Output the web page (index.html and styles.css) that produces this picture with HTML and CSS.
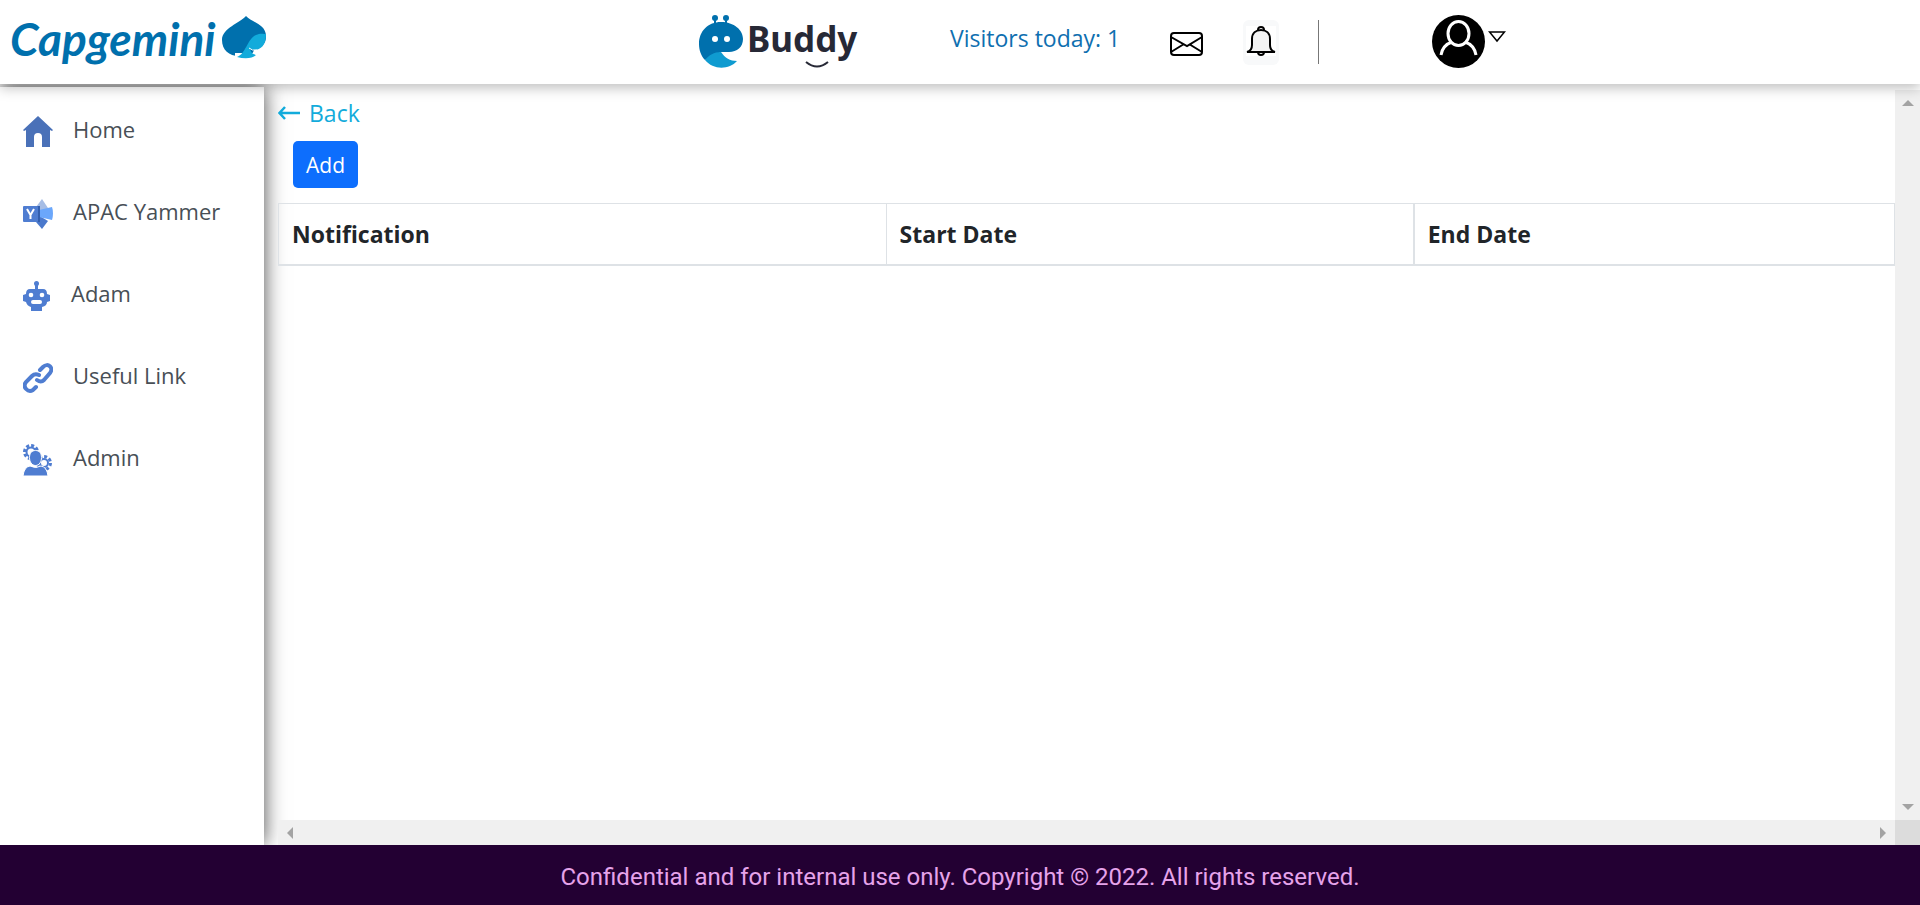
FILE: index.html
```html
<!DOCTYPE html>
<html lang="en">
<head>
<meta charset="utf-8">
<title>Buddy - Notifications</title>
<link rel="stylesheet" href="styles.css">
</head>
<body>
<header class="topbar">
  <a class="brand" href="#" aria-label="Capgemini home">
    <svg width="260" height="68" viewBox="0 0 260 68">
      <text class="brand-name" x="-1" y="48">Capgemini</text>
      <path fill="#0070ad" d="M235 8c5 6 20 8 20 20 0 9-4 10-10 10-4 9-7 14-12 14-3-2-4-4-5-4-10 0-17-6-17-16 0-12 18-17 24-24z"/>
      <path fill="#fff" d="M224 45h22v8h-22z"/>
      <path fill="#12abdb" d="M255 26c0 11-5 16-12 16-1 0-3-1-4-1 1 4 3 5 6 6-4 4-12 4-19 2 9-3 10-18 19-22 4-2 8-1 10-1z"/>
      <path fill="none" stroke="#fff" d="M238 40q3 3 8 2"/>
    </svg>
  </a>
  <a class="buddy" href="#">
    <svg width="44" height="54" viewBox="0 0 44 54" aria-hidden="true">
      <g fill="#0070ad"><circle cx="16" cy="4" r="3"/><circle cx="27" cy="4" r="3"/>
      <path d="M15 4h2v6h-2zM26 4h2v6h-2z"/>
      <path d="M22 8c13 0 22 8 22 17 0 8-6 13-14 13h-8L6 46C2 42 0 36 0 30 0 17 9 8 22 8z"/></g>
      <path fill="#0f9bd0" d="M6 46c4-5 9-8 16-8 4 6 9 9 16 9-8 9-24 9-32-1z"/>
      <circle cx="16" cy="25" r="3" fill="#fff"/><circle cx="28" cy="25" r="3" fill="#fff"/>
    </svg>
    <span class="buddy-name">Buddy</span>
    <svg class="smile" width="26" height="8" viewBox="0 0 26 8" aria-hidden="true"><path d="M2 1q11 9 22 0" fill="none" stroke="#272936" stroke-width="2"/></svg>
  </a>
  <span class="visitors">Visitors today: 1</span>
  <button class="icon-btn mail" aria-label="Messages">
    <svg width="33" height="24" viewBox="0 0 33 24" fill="none" stroke="#000" stroke-width="2"><rect x="1" y="1" width="31" height="22" rx="3"/><path d="M1 5l16 9 15-9M1 20l13-8M32 20l-13-8"/></svg>
  </button>
  <button class="icon-btn bell" aria-label="Notifications">
    <svg width="30" height="30" viewBox="0 0 30 30" fill="none" stroke="#000" stroke-width="2"><path fill="#fff" stroke="none" d="M0 0h30v30H0z"/><path fill="#f3f3f3" d="M1 26c4-1 5-3 5-7v-6c0-6 4-9 9-9s9 3 9 9v6c0 4 1 6 5 7z"/><path d="M12 4c0-4 6-4 6 0M12 26c0 4 6 4 6 0"/></svg>
  </button>
  <span class="divider"></span>
  <button class="icon-btn account" aria-label="Account menu">
    <svg width="53" height="53" viewBox="0 0 53 53"><circle cx="26.500" cy="26.500" r="26.500"/><g fill="none" stroke="#fff" stroke-width="3"><ellipse cx="26.500" cy="18.500" rx="10.500" ry="12"/><path d="M9 40c1-6 5-11 11-13M44 40c-1-6-5-11-11-13"/></g></svg>
    <svg class="caret" width="18" height="12" viewBox="0 0 18 12"><path d="M1.500 1h15L9 10z" fill="#fff" stroke="#000" stroke-width="1.500"/></svg>
  </button>
</header>
<div class="body">
  <nav class="sidebar">
    <a class="item" href="#"><svg width="30" height="32" viewBox="0 0 30 32"><path fill="#4a71b8" d="M15 0l15 14-1 1-2-1v17h-8V21q0-4-4-4t-4 4v10H3V14l-2 1-1-1z"/></svg><span>Home</span></a>
    <a class="item" href="#"><svg width="30" height="32" viewBox="0 0 30 32"><path fill="#a6bde5" d="M19 1l6 9-9 8-3-9z"/><path fill="#4b79cc" d="M15 17l10 6-6 8-6-7z"/><path fill="#6ba7fb" d="M16 12l13-3q2 6 0 13l-13-3z"/><path fill="#335fae" d="M14 8h3v16h-3z"/><rect y="8" width="15" height="16" rx="1" fill="#4f7dd1"/><path fill="none" stroke="#fff" stroke-width="2" d="M4 11l3.500 6 3.500-6M7.500 16v5"/></svg><span>APAC Yammer</span></a>
    <a class="item" href="#"><svg width="28" height="32" viewBox="0 0 28 32" fill="#4f7dd1"><circle cx="13.500" cy="3.500" r="2.500"/><path d="M12 4h3v5h5q4 0 4 5l3 1v6l-3 1q0 4-5 5v4H8v-4q-4-1-5-5l-3-1v-6l3-1q0-5 4-5h5z"/><g fill="#fff"><circle cx="8" cy="15" r="2.300"/><circle cx="19" cy="15" r="2.300"/><rect x="8" y="20" width="11" height="4" rx="2"/></g></svg><span>Adam</span></a>
    <a class="item" href="#"><svg width="30" height="32" viewBox="0 0 30 32" fill="none" stroke="#4f7dd1" stroke-width="4" stroke-linecap="round"><path d="M17 8l3-3c5-5 11 1 7 6l-6 7q-3 3-7 0"/><path d="M16 13q-4-2-7 1l-6 6c-4 5 2 11 7 8l3-3"/></svg><span>Useful Link</span></a>
    <a class="item" href="#"><svg width="30" height="32" viewBox="0 0 30 32" fill="#4f7dd1"><g fill="none" stroke="#4f7dd1"><circle cx="8" cy="8" r="4.500" stroke-width="2"/><circle cx="8" cy="8" r="6.500" stroke-width="3" stroke-dasharray="3 2"/><circle cx="21" cy="19" r="4" stroke-width="2"/><circle cx="21" cy="19" r="6.500" stroke-width="3" stroke-dasharray="3 2"/></g><path stroke="#fff" d="M12.500 6.500c4 0 6 3 6 7s-2 8-6 8-6-4-6-8 2-7 6-7z"/><path stroke="#fff" d="M0 32q1-9 7-10 6 3 11 0 6 1 7 10z"/></svg><span>Admin</span></a>
  </nav>
  <main class="panel">
    <div class="content">
      <a class="back" href="#"><svg width="22" height="14" viewBox="0 0 22 14" fill="none" stroke="#12abdb" stroke-width="2.500"><path d="M22 7H2M7 1L1.500 7 7 13"/></svg><span>Back</span></a>
      <button class="add">Add</button>
      <table class="grid">
        <colgroup><col class="c1"><col class="c2"><col class="c3"></colgroup>
        <thead><tr><th>Notification</th><th>Start Date</th><th>End Date</th></tr></thead>
      </table>
    </div>
    <div class="vbar" aria-hidden="true"><span class="tri up"></span><span class="tri down"></span></div>
    <div class="hbar" aria-hidden="true"><span class="tri left"></span><span class="tri right"></span></div>
    <div class="corner"></div>
  </main>
</div>
<footer class="footer">Confidential and for internal use only. Copyright © 2022. All rights reserved.</footer>
</body>
</html>
```
FILE: styles.css
```css
* { box-sizing: border-box; }
body {
  margin: 0;
  min-height: 100vh;
  display: flex;
  flex-direction: column;
  background: #fff;
  color: #212529;
  font: 24px/36px "Open Sans", "Noto Sans", sans-serif;
}
a { text-decoration: none; color: inherit; }
button { font: inherit; cursor: pointer; }
svg { display: block; flex: none; }

.topbar {
  display: grid;
  grid-template-columns: 699fr 251fr 220fr 73fr 75fr 114fr 488fr;
  height: 84px;
  align-items: center;
  background: #fff;
  box-shadow: 0 4px 12px rgba(0, 0, 0, .25);
  position: relative;
  z-index: 2;
}
.brand { padding-left: 11px; }
.brand-name { font: italic 700 46px Lato, sans-serif; fill: #0070ad; }
.buddy { display: flex; align-items: center; gap: 4px; position: relative; padding-bottom: 2px; }
.buddy-name { font: 700 35px/44px "Noto Sans", sans-serif; color: #272936; padding-bottom: 4px; }
.smile { position: absolute; left: 105px; bottom: 1px; }
.visitors { color: #0f6fb0; font-size: 23px; padding-bottom: 8px; }
.icon-btn { border: 0; padding: 0; background: none; justify-self: start; }
.mail { padding-top: 4px; }
.bell { background: #f8f9fa; border-radius: 6px; padding: 6px 3px 9px; }
.divider { width: 1px; height: 44px; background: #777; margin-bottom: 1px; }
.account { display: flex; gap: 3px; align-items: flex-start; padding-bottom: 2px; }
.caret { margin-top: 16px; }

.body { flex: 1; display: flex; gap: 14px; }
.sidebar {
  width: 264px;
  flex: none;
  margin-top: 3px;
  padding-top: 2px;
  background: #fff;
  box-shadow: 0 0 20px rgba(0, 0, 0, .7);
}
.item {
  display: flex;
  align-items: center;
  gap: 20px;
  height: 82px;
  padding-left: 23px;
  color: #484f56;
  font-size: 22px;
}
.item svg { margin-top: 4px; }
.item span { padding-bottom: 2px; }

.panel {
  flex: 1;
  display: grid;
  grid-template: 1fr 25px / 1fr 25px;
  padding-top: 6px;
}
.back { display: flex; align-items: center; gap: 9px; color: #12abdb; height: 45px; font-size: 23px; }
.add {
  display: block;
  margin: 6px 0 15px 15px;
  padding: 0 13px;
  height: 47px;
  border: 0;
  border-radius: 5px;
  background: #0d6efd;
  color: #fff;
  font-size: 21px;
}
.grid { width: 100%; border-collapse: collapse; table-layout: fixed; }
.c1 { width: 37.6%; }
.c2 { width: 32.65%; }
.grid th {
  height: 61px;
  padding: 0 13px;
  border: 1px solid #dee2e6;
  border-bottom-width: 2px;
  text-align: left;
  font-size: 23px;
}
.grid th:last-child { border-left-width: 2px; }

.vbar, .hbar { display: flex; justify-content: space-between; align-items: center; background: #f0f0f0; }
.vbar { flex-direction: column; padding: 10px 0; }
.hbar { padding: 0 9px; }
.corner { background: #dcdcdc; }
.tri { border: 6px solid transparent; }
.up { border-top: 0; border-bottom-color: #a3a3a3; }
.down { border-bottom: 0; border-top-color: #a3a3a3; }
.left { border-left: 0; border-right-color: #a3a3a3; }
.right { border-right: 0; border-left-color: #a3a3a3; }

.footer {
  padding: 14px 0 10px;
  background: #230033;
  color: #e6a3ea;
  font: 24px/36px Roboto, sans-serif;
  text-align: center;
  position: relative;
  z-index: 2;
}
```
